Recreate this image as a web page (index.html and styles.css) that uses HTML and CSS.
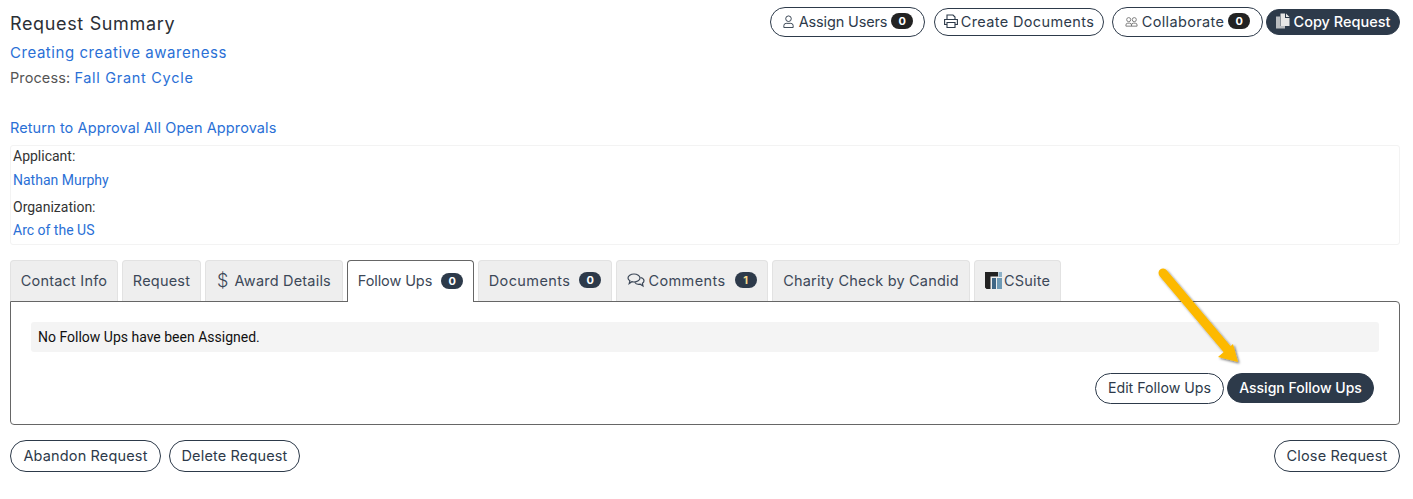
FILE: index.html
```html
<!DOCTYPE html>
<html lang="en">
<head>
<meta charset="utf-8">
<title>Request Summary</title>
<link rel="stylesheet" href="styles.css">
</head>
<body>
<div class="page">
  <header class="top">
    <div class="intro">
      <h1 class="title">Request Summary</h1>
      <p class="line first"><a href="#">Creating creative awareness</a></p>
      <p class="line process">Process: <a href="#">Fall Grant Cycle</a></p>
      <p class="line back"><a href="#">Return to Approval All Open Approvals</a></p>
    </div>
    <div class="actions">
      <a class="btn tall a1" href="#">
        <svg class="ico" viewBox="0 0 14 14" fill="none" stroke="currentColor" stroke-width="1"><circle cx="7" cy="4" r="3"/><path d="M2 13.500v-2a2.500 2.500 0 0 1 2.500-2.500h5a2.500 2.500 0 0 1 2.500 2.500v2z"/></svg>
        <span class="ls1">Assign Users</span> <span class="badge dark">0</span></a>
      <a class="btn mid a2" href="#">
        <svg class="ico wide" viewBox="0 0 14 14" fill="none" stroke="currentColor" stroke-width="1.100"><path d="M3 5.500V1h6l2 2v2.500M3 10.500H.6V5.500h12.800v5H11M3 8.500h8v5H3z"/></svg>
        <span class="ls2">Create Documents</span></a>
      <a class="btn tall a3" href="#">
        <svg class="ico gray" viewBox="0 0 14 14" fill="none" stroke="currentColor" stroke-width="1"><circle cx="4" cy="5" r="2.200"/><circle cx="10" cy="5" r="2.200"/><path d="M1 12v-1.200a2 2 0 0 1 2-2h2a2 2 0 0 1 2 2V12zM7 12v-1.200a2 2 0 0 1 2-2h2a2 2 0 0 1 2 2V12z"/></svg>
        <span class="ls2">Collaborate</span> <span class="badge dark">0</span></a>
      <a class="btn solid a4" href="#">
        <svg class="ico copy" viewBox="0 0 14 16"><path fill="#b9bcc0" d="M0 3.500h4V13h5v2.500H0z"/><path fill="#e6e6e6" d="M4.500.5H9V5h4.500v8h-9z"/><path fill="#e6e6e6" d="M10 .5l3.500 3.500H10z"/></svg>
        Copy Request</a>
    </div>
  </header>

  <section class="people">
    <div class="label">Applicant:</div>
    <div class="value"><a href="#">Nathan Murphy</a></div>
    <div class="label org">Organization:</div>
    <div class="value last"><a href="#">Arc of the US</a></div>
  </section>

  <nav class="tabs">
    <a class="tab t1" href="#">Contact Info</a>
    <a class="tab t2" href="#">Request</a>
    <a class="tab t3" href="#"><span class="dollar">$</span> Award Details</a>
    <a class="tab t4 active" href="#"><span class="tight">Follow Ups</span> <span class="badge navy">0</span></a>
    <a class="tab t5" href="#"><span class="roomy">Documents</span> <span class="badge navy">0</span></a>
    <a class="tab t6" href="#">
      <svg class="ico chat" viewBox="0 0 18 15" fill="none" stroke="currentColor" stroke-width="1.200"><path d="M7 1c3.300 0 6 1.800 6 4s-2.700 4-6 4c-.8 0-1.500-.1-2.200-.3L2.200 10.500l.7-2.700C1.700 7 1 6 1 5c0-2.200 2.700-4 6-4z"/><path d="M13.500 4.500c2 .5 3.500 1.800 3.500 3.300 0 1-.6 1.900-1.600 2.500l.6 2.700-2.800-1.800c-2.300.4-4.600-.4-5.500-2"/></svg>
      <span class="roomy">Comments</span> <span class="badge navy gold">1</span></a>
    <a class="tab t7" href="#">Charity Check by Candid</a>
    <a class="tab t8" href="#">
      <svg class="ico logo" viewBox="0 0 17 17"><path fill="#222" d="M0 0h13v4.500H5.500V17H1.500L0 15.500z"/><path fill="#3f6685" d="M7 6h4v11H7z"/><path fill="#6f9ab5" d="M12 6h5v11h-5z"/><path fill="#8fb2c8" d="M13.500 0H17v5h-3.500z"/></svg>
      CSuite</a>
  </nav>

  <section class="panel">
    <div class="notice">No Follow Ups have been Assigned.</div>
    <div class="panel-actions">
      <a class="btn small edit" href="#">Edit Follow Ups</a>
      <a class="btn solid small assign" href="#">Assign Follow Ups</a>
    </div>
  </section>

  <footer class="bottom">
    <div class="bottom-left">
      <a class="btn big b1" href="#">Abandon Request</a>
      <a class="btn big b2" href="#">Delete Request</a>
    </div>
    <a class="btn big b3" href="#">Close Request</a>
  </footer>

  <svg class="arrow" viewBox="0 0 100 110" aria-hidden="true">
    <defs>
      <filter id="sh" x="-20%" y="-20%" width="140%" height="140%">
        <feDropShadow dx="1.500" dy="1.500" stdDeviation="1.200" flood-color="#000" flood-opacity=".55"/>
      </filter>
    </defs>
    <g filter="url(#sh)">
      <path d="M8 8L72 84" fill="none" stroke="#fdb900" stroke-width="9" stroke-linecap="round"/>
      <path d="M83 97L63 92L78 79z" fill="#fdb900"/>
    </g>
  </svg>
</div>
</body>
</html>
```
FILE: styles.css
```css
* { box-sizing: border-box; }
html, body { margin: 0; padding: 0; background: #fff; }
body { font-family: "Inter", "Noto Sans", sans-serif; color: #2d3a4a; }
a { color: inherit; text-decoration: none; }

.page { position: relative; width: 1413px; height: 499px; padding: 0 13px 0 10px; }

.top { display: flex; justify-content: space-between; align-items: flex-start; height: 145px; }
.intro { padding-top: 13px; }
.title { margin: 0; font-size: 18px; line-height: 22px; font-weight: 400; color: #2b2f36; letter-spacing: .65px; }
.line { margin: 0; font-size: 14.500px; line-height: 25px; color: #555; white-space: nowrap; }
.line a { color: #2a70d6; }
.line.first { margin-top: 5px; font-size: 15px; letter-spacing: .55px; }
.process { letter-spacing: .1px; }
.process a { letter-spacing: .7px; }
.back { margin-top: 25px; letter-spacing: .1px; }

.actions { display: flex; align-items: center; padding-top: 7px; height: 37px; }
.btn { display: inline-flex; align-items: center; justify-content: center; padding-bottom: 2px; border: 1px solid #2d3a4a; border-radius: 16px; background: #fff; color: #2d3a4a; font-size: 14.500px; white-space: nowrap; }
.btn.tall { height: 30px; }
.btn.mid { height: 28px; }
.btn.big { height: 32px; letter-spacing: .15px; }
.btn.solid { background: #2d3a4a; color: #fff; font-weight: 500; height: 26px; }
.btn.small { font-size: 14.200px; }
.ls1 { letter-spacing: -.15px; }
.ls2 { letter-spacing: .35px; }
.a1 { width: 155px; gap: 4px; }
.a2 { width: 170px; margin-left: 9px; gap: 3px; }
.a3 { width: 151px; margin-left: 8px; gap: 4px; }
.a4 { width: 134px; margin-left: 3px; gap: 4px; }

.ico { width: 13px; height: 13px; flex: none; }
.ico.wide { width: 14px; height: 14px; }
.ico.gray { color: #777; }
.ico.copy { width: 14px; height: 16px; }
.ico.chat { width: 18px; height: 15px; margin-right: 3px; }
.ico.logo { width: 17px; height: 17px; margin-right: 2px; }

.badge { display: inline-flex; align-items: center; justify-content: center; min-width: 22px; height: 16px; border-radius: 9px; font-size: 11px; font-weight: 700; color: #fff; letter-spacing: 0; }
.badge.dark { background: #222; }
.badge.navy { background: #2d3a4a; margin-left: 9px; }
.badge.gold { color: #f4d98a; }

.people { height: 100px; border: 1px solid #f3f3f3; border-radius: 3px; padding: 0 2px; font-family: "Roboto", sans-serif; font-size: 14px; color: #333; }
.label { height: 20px; line-height: 20px; }
.value { height: 24px; line-height: 24px; margin-top: 2px; }
.value a { color: #2a70d6; }
.label.org { margin-top: 5px; }
.value.last { margin-top: 1px; }

.tabs { display: flex; height: 41px; margin-top: 15px; position: relative; z-index: 1; }
.tab { display: flex; align-items: center; justify-content: center; height: 41px; padding-bottom: 2px; background: #eee; border: 1px solid #e2e2e2; border-bottom: 0; border-radius: 4px 4px 0 0; font-size: 14.500px; letter-spacing: .2px; color: #3c4858; white-space: nowrap; }
.tab + .tab { margin-left: 4px; }
.tab.active { background: #fff; border: 1px solid #666; border-bottom: 0; height: 42px; }
.tight { letter-spacing: -.1px; }
.roomy { letter-spacing: .4px; }
.t1 { width: 108px; }
.t2 { width: 79px; }
.t3 { width: 138px; }
.t4 { width: 127px; }
.t5 { width: 134px; }
.t6 { width: 152px; }
.t7 { width: 198px; }
.t8 { width: 87px; }
.dollar { font-size: 18px; margin-right: 6px; font-weight: 300; }

.panel { height: 124px; border: 1px solid #666; border-radius: 0 4px 4px 4px; padding: 20px 20px 0; }
.notice { height: 30px; background: #f4f4f4; border-radius: 3px; padding-left: 7px; font-family: "Roboto", sans-serif; font-size: 14px; line-height: 30px; color: #111; }
.panel-actions { display: flex; justify-content: flex-end; align-items: flex-start; margin-top: 21px; padding-right: 5px; }
.btn.edit { width: 129px; height: 31px; border-radius: 16px; }
.btn.assign { width: 147px; height: 30px; margin-left: 3px; border-radius: 15px; font-size: 14px; }

.bottom { display: flex; justify-content: space-between; margin-top: 15px; }
.bottom-left { display: flex; gap: 8px; }
.b1 { width: 151px; }
.b2 { width: 131px; }
.b3 { width: 126px; }

.arrow { position: absolute; left: 1155px; top: 265px; width: 100px; height: 110px; }
```
